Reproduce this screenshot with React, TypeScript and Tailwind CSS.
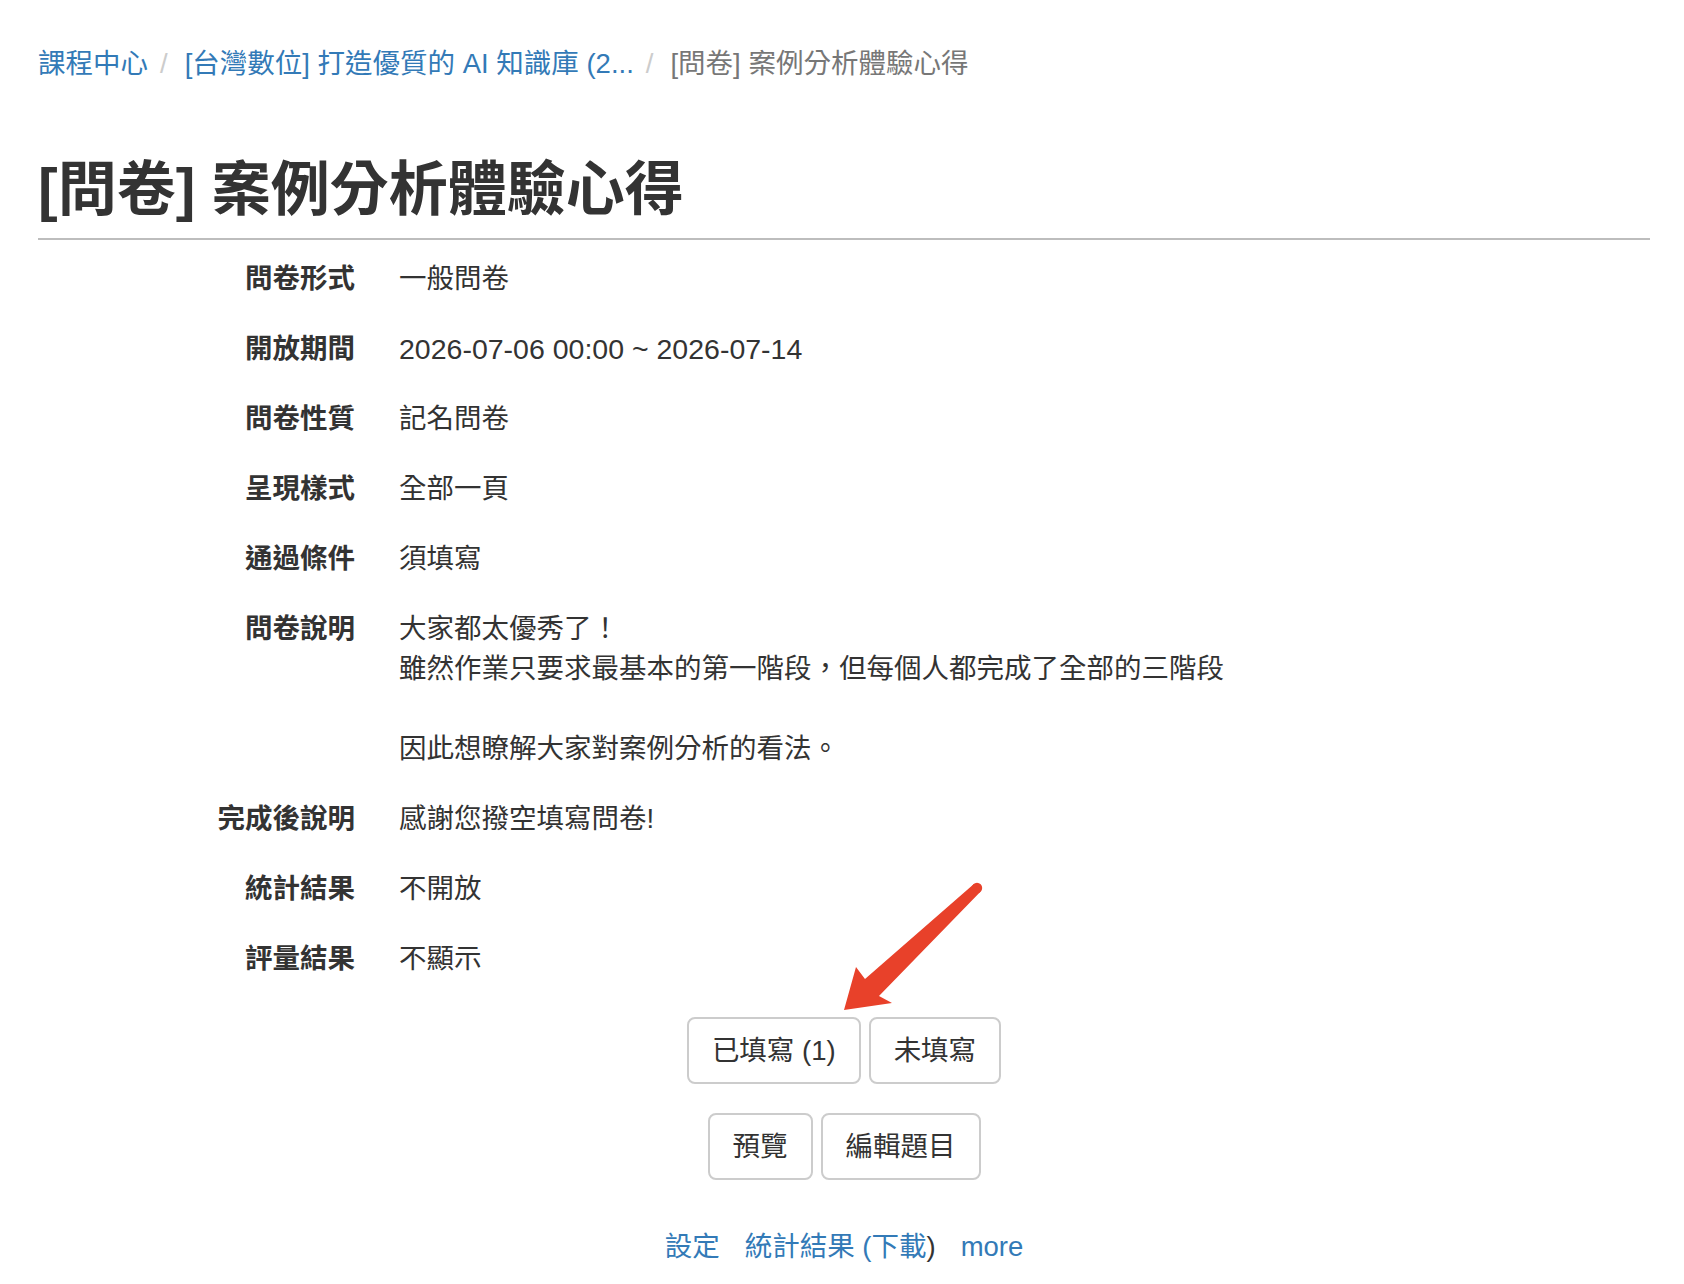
const FONT = "font-['Liberation_Sans','Noto_Sans_CJK_TC',sans-serif]";

type Row = {
  label: string;
  lines: string[];
  latin?: boolean;
};

const rows: Row[] = [
  { label: "問卷形式", lines: ["一般問卷"] },
  { label: "開放期間", lines: ["2026-07-06 00:00 ~ 2026-07-14"], latin: true },
  { label: "問卷性質", lines: ["記名問卷"] },
  { label: "呈現樣式", lines: ["全部一頁"] },
  { label: "通過條件", lines: ["須填寫"] },
  {
    label: "問卷說明",
    lines: [
      "大家都太優秀了！",
      "雖然作業只要求最基本的第一階段，但每個人都完成了全部的三階段",
      "",
      "因此想瞭解大家對案例分析的看法。",
    ],
  },
  { label: "完成後說明", lines: ["感謝您撥空填寫問卷!"] },
  { label: "統計結果", lines: ["不開放"] },
  { label: "評量結果", lines: ["不顯示"] },
];

function Btn({ children }: { children: React.ReactNode }) {
  return (
    <button
      type="button"
      className="h-[67px] rounded-[8px] border-2 border-[#cccccc] bg-white px-[23px] text-[27.5px] leading-[40px] text-[#333333]"
    >
      {children}
    </button>
  );
}

// red annotation arrow pointing at the first button
function Arrow() {
  return (
    <svg
      className="pointer-events-none absolute left-[830px] top-[875px]"
      width="170"
      height="160"
      viewBox="0 0 170 160"
    >
      <circle cx="147" cy="13" r="5.2" fill="#e8412a" />
      <polygon
        fill="#e8412a"
        points="14,135 26,92 35,104 143.6,9.3 150.4,16.7 49,121 62,128"
      />
    </svg>
  );
}

function Sep() {
  return <span className="pl-[12px] pr-[17px] text-[#cccccc]">/</span>;
}

export default function App() {
  return (
    <div className={`relative min-h-[1284px] bg-white ${FONT} text-[#333333]`}>
      <div className="ml-[38px] w-[1612px]">
        {/* Breadcrumb */}
        <nav className="pt-[44px] text-[27.5px] leading-[40px]">
          <a className="text-[#337ab7]">課程中心</a>
          <Sep />
          <a className="text-[#337ab7]">[台灣數位] 打造優質的 AI 知識庫 (2...</a>
          <Sep />
          <span className="text-[#777777]">[問卷] 案例分析體驗心得</span>
        </nav>

        {/* Title */}
        <h1 className="mt-[74px] text-[59px] font-bold leading-[64px] text-[#333333]">
          [問卷] 案例分析體驗心得
        </h1>
        <div className="mt-[16px] h-[2px] bg-[#bdbdbd]" />

        {/* Info rows */}
        <div className="mt-[4px] text-[27.5px] leading-[40px]">
          {rows.map((r) => (
            <div key={r.label} className="flex py-[15px]">
              <div className="w-[317px] shrink-0 text-right font-bold">{r.label}</div>
              <div className="pl-[44px]">
                {r.lines.map((l, i) => (
                  <div key={i} className={r.latin ? "h-[40px] text-[28.5px]" : "h-[40px]"}>
                    {l}
                  </div>
                ))}
              </div>
            </div>
          ))}
        </div>

        {/* Buttons */}
        <div className="mt-[23px] flex justify-center gap-[8px]">
          <Btn>已填寫 (1)</Btn>
          <Btn>未填寫</Btn>
        </div>
        <div className="mt-[29px] flex justify-center gap-[8px]">
          <Btn>預覽</Btn>
          <Btn>編輯題目</Btn>
        </div>

        {/* Links */}
        <div className="mt-[47px] flex justify-center gap-[25px] text-[27.5px] leading-[40px]">
          <a className="text-[#337ab7]">設定</a>
          <span>
            <a className="text-[#337ab7]">統計結果 (下載</a>
            <span className="text-[#333333]">)</span>
          </span>
          <a className="text-[#337ab7]">more</a>
        </div>
      </div>
      <Arrow />
    </div>
  );
}
